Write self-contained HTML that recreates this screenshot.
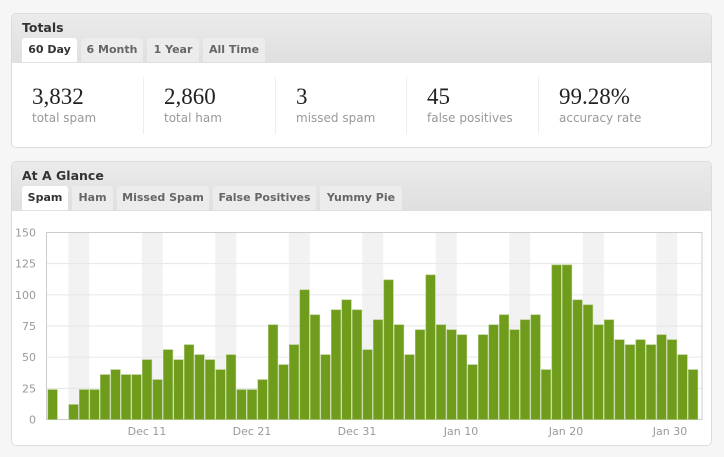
<!DOCTYPE html>
<html><head><style>
body{margin:0;background:#f6f6f6;width:724px;height:457px;overflow:hidden;font-family:"DejaVu Sans","Liberation Sans",sans-serif;}
.panel{position:absolute;left:11px;width:699px;border:1px solid #dcdcdc;border-radius:5px;background:#fff;overflow:hidden}
.hd{position:absolute;left:0;top:0;right:0;height:48px;background:linear-gradient(#ebebeb,#dfdfdf);border-bottom:1px solid #e0e0e0}
.title{position:absolute;left:10px;top:6px;font-weight:bold;font-size:12.5px;color:#333}
.tab{position:absolute;top:24px;height:24px;line-height:24px;background:#ececec;font-weight:bold;font-size:11px;color:#666;text-align:center;border-radius:3px 3px 0 0}
.tab.on{background:#fff;color:#333}
.st{position:absolute;top:70px}
.num{font-family:Georgia,"Liberation Serif",serif;font-size:23px;color:#222;line-height:26px}
.lbl{font-size:12px;color:#999;margin-top:1px}
.div{position:absolute;top:63px;width:1px;height:57px;background:#eee}
</style></head><body>
<div class="panel" style="top:13px;height:133px">
 <div class="hd"></div>
 <div class="title">Totals</div>
 <div class="tab on" style="left:10px;width:55px">60 Day</div>
 <div class="tab" style="left:69px;width:62px">6 Month</div>
 <div class="tab" style="left:135px;width:52px">1 Year</div>
 <div class="tab" style="left:191px;width:62px">All Time</div>
 <div class="st" style="left:20px"><div class="num">3,832</div><div class="lbl">total spam</div></div>
 <div class="div" style="left:131px"></div>
 <div class="st" style="left:152px"><div class="num">2,860</div><div class="lbl">total ham</div></div>
 <div class="div" style="left:263px"></div>
 <div class="st" style="left:284px"><div class="num">3</div><div class="lbl">missed spam</div></div>
 <div class="div" style="left:394px"></div>
 <div class="st" style="left:415px"><div class="num">45</div><div class="lbl">false positives</div></div>
 <div class="div" style="left:526px"></div>
 <div class="st" style="left:547px"><div class="num">99.28%</div><div class="lbl">accuracy rate</div></div>
</div>
<div class="panel" style="top:161px;height:283px">
 <div class="hd"></div>
 <div class="title">At A Glance</div>
 <div class="tab on" style="left:10px;width:46px">Spam</div>
 <div class="tab" style="left:60px;width:41px">Ham</div>
 <div class="tab" style="left:105px;width:92px">Missed Spam</div>
 <div class="tab" style="left:201px;width:103px">False Positives</div>
 <div class="tab" style="left:308px;width:82px">Yummy Pie</div>
</div>
<svg id="c" width="724" height="457" style="position:absolute;left:0;top:0" xmlns="http://www.w3.org/2000/svg"></svg>
<script>
var v=[24,0,12,24,24,36,40,36,36,48,32,56,48,60,52,48,40,52,24,24,32,76,44,60,104,84,52,88,96,88,56,80,112,76,52,72,116,76,72,68,44,68,76,84,72,80,84,40,124,124,96,92,76,80,64,60,64,60,68,64,52,40];
var s='',x0=47.3,p=10.5,y0=419.5,k=187/150;
for(var i=2;i<62;i+=7)s+='<rect x="'+(x0+i*p)+'" y="232" width="'+(2*p)+'" height="187" fill="#f2f2f2"/>';
for(var t=0;t<=150;t+=25){var y=y0-t*k;s+='<line x1="46" x2="702" y1="'+y+'" y2="'+y+'" stroke="'+(t==0?'#ccc':'#e6e6e6')+'"/>';s+='<text x="36" y="'+(y+4)+'" text-anchor="end" font-size="11" fill="#999" font-family="DejaVu Sans,sans-serif">'+t+'</text>';}
s+='<rect x="46.5" y="232.5" width="655.5" height="187" fill="none" stroke="#ccc"/>';
for(var i=0;i<62;i++)if(v[i])s+='<rect x="'+(x0+i*p+0.5)+'" y="'+(y0-v[i]*k)+'" width="'+(p-1)+'" height="'+(v[i]*k)+'" fill="#6f9c1b" stroke="#a9c47a" stroke-width="0.6"/>';
var L=[["Dec 11",147],["Dec 21",252],["Dec 31",357],["Jan 10",461],["Jan 20",566],["Jan 30",670]];
L.forEach(function(l){s+='<text x="'+l[1]+'" y="435" text-anchor="middle" font-size="11" fill="#999" font-family="DejaVu Sans,sans-serif">'+l[0]+'</text>';});
document.getElementById('c').innerHTML=s;
</script>
</body></html>
